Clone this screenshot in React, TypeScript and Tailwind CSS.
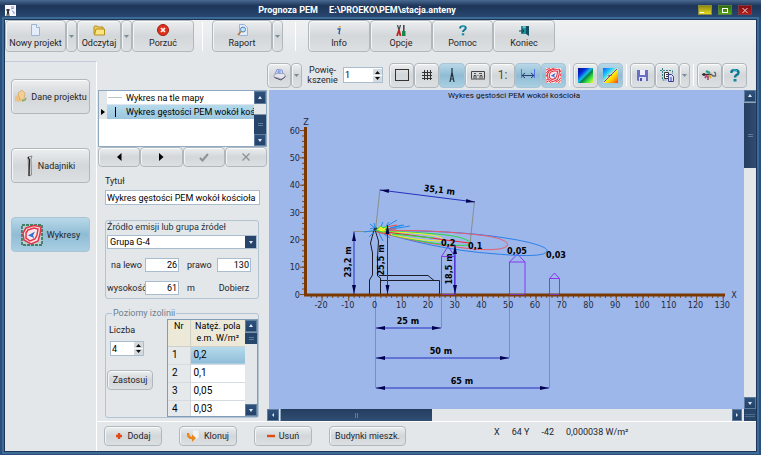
import React from "react";

type Kids = { children?: React.ReactNode; className?: string };

const face =
  "rounded-[4px] border border-[#b0b7bd] bg-linear-to-b from-[#eceeef] via-[#d3d7da] via-50% to-[#dde0e2] shadow-[inset_0_1px_0_#fafbfb,inset_1px_0_0_#f2f4f5]";
const active =
  "rounded-[4px] border border-[#a9c4d4] bg-linear-to-b from-[#b9d8e8] via-[#8fbcd5] via-50% to-[#a9cfe2]";
const field = "border border-[#a9bdcf] bg-white text-black outline-none";

function BigButton({ label, icon, className }: { label: string; icon: React.ReactNode; className: string }) {
  return (
    <button className={`${face} flex h-8 flex-col items-center justify-center whitespace-nowrap leading-[12px] ${className}`}>
      <span className="flex h-[14px] items-center">{icon}</span>
      <span>{label}</span>
    </button>
  );
}

function DropButton({ className, label }: { className: string; label: string }) {
  return (
    <button aria-label={label} className={`${face} flex w-[11px] items-center justify-center ${className}`}>
      <svg width="5" height="3" viewBox="0 0 5 3"><path d="M0 0h5L2.500 3z" fill="#7b8c99" /></svg>
    </button>
  );
}

function ToolButton({ children, label, on, className = "w-[25px]" }: Kids & { label: string; on?: boolean }) {
  return (
    <button aria-label={label} className={`${on ? active : face} flex h-[25px] shrink-0 items-center justify-center ${className}`}>
      {children}
    </button>
  );
}

function Divider({ className = "" }: { className?: string }) {
  return <div className={`w-px bg-white ${className}`} />;
}

function Arrow({ dir }: { dir: "up" | "down" | "left" | "right" }) {
  const d = { up: "M1 4L3 1L5 4z", down: "M1 2h4L3 5z", left: "M4 1v4L2 3z", right: "M2 1v4L4 3z" }[dir];
  return (
    <svg width="6" height="6" viewBox="0 0 6 6"><path d={d} fill="#dfe9f2" /></svg>
  );
}

function ScrollCap({ dir, className }: { dir: "up" | "down" | "left" | "right"; className: string }) {
  return (
    <button
      aria-label={`scroll ${dir}`}
      className={`flex shrink-0 items-center justify-center border border-[#5f7c9c] bg-linear-to-b from-[#2e517d] to-[#23426a] ${className}`}
    >
      <Arrow dir={dir} />
    </button>
  );
}

function Spinner({ id, value, className }: { id: string; value: string; className: string }) {
  return (
    <div className={`flex items-center border border-[#a9bdcf] bg-white ${className}`}>
      <input id={id} defaultValue={value} className="min-w-0 flex-1 bg-transparent px-px text-black outline-none" />
      <svg width="9" height="13" viewBox="0 0 9 13">
        <rect x="0" y="0" width="9" height="6" rx="1" fill="#d5dade" />
        <rect x="0" y="7" width="9" height="6" rx="1" fill="#d5dade" />
        <path d="M2 5h5L4.500 2zM2 8h5L4.500 11z" fill="#111" />
      </svg>
    </div>
  );
}

function Isolines({ size, framed }: { size: number; framed?: boolean }) {
  return (
    <svg width={size} height={size} viewBox="0 0 22 22" fill="none">
      {framed ? (
        <rect x="1" y="1" width="20" height="20" fill="#b7cfd6" stroke="#22663f" strokeWidth="1.400" strokeDasharray="3 1" />
      ) : (
        <g>
          <rect width="22" height="22" fill="#fbe9e9" />
          <path d="M0 3L6 0M0 8L3 4L12 0M0 13L2 9M0 18L3 16M0 21L4 19L8 22M14 21L19 18L22 14M18 22L22 18M19 1L22 6M21 8v4" stroke="#f0262c" strokeWidth="1.400" />
        </g>
      )}
      <path d="M5 4L13 1.500L20 3L19 10L17 17L10 20L3 16L2 9z" fill="#f8e6ea" stroke="#e23446" strokeWidth="1.500" />
      <path d="M7 6L13 4L17 5L16 11L14 15L9 17L5 14L5 9z" stroke="#e23446" strokeWidth="1.500" />
      <path d="M7 11.500L14 7.500L12 11.500L13.500 15L11 13z" fill="#2c6fd0" />
    </svg>
  );
}

function HelpMark({ className = "" }: { className?: string }) {
  return (
    <svg className={className} viewBox="0 0 10 13" fill="none">
      <path d="M1.500 4V2.500Q2 1 5 1Q8.500 1 8.500 3.500Q8.500 5 6.500 6Q5 7 5 8.500" stroke="#0a7792" strokeWidth="2.400" />
      <path d="M3 1.200Q5 .5 7 1.500" stroke="#35c7da" />
      <rect x="3.500" y="10" width="3" height="2.500" fill="#0b8ba3" />
    </svg>
  );
}

function Spectrum({ full }: { full?: boolean }) {
  const id = full ? "spectrum-full" : "spectrum-half";
  return (
    <svg width="15" height="15" viewBox="0 0 15 15">
      <defs>
        <linearGradient id={id} x1="0" y1="0" x2="1" y2="1">
          <stop offset="0" stopColor={full ? "#1b5cff" : "#03107c"} />
          <stop offset=".28" stopColor={full ? "#16c6ff" : "#0a2ce0"} />
          <stop offset=".48" stopColor={full ? "#a8f0c0" : "#10c5e0"} />
          <stop offset=".56" stopColor={full ? "#fff000" : "#087a50"} />
          <stop offset=".75" stopColor={full ? "#ffb000" : "#35e43a"} />
          <stop offset="1" stopColor={full ? "#ff3a10" : "#fff44a"} />
        </linearGradient>
      </defs>
      <rect width="15" height="15" fill={`url(#${id})`} />
      {full && <path d="M1 14L14 1M5 8l4-1" stroke="#a43c7c" fill="none" />}
    </svg>
  );
}

function TitleBar() {
  return (
    <header className="flex h-5 shrink-0 items-center bg-linear-to-b from-[#4a6a92] via-[#1d3557] via-30% to-[#2b4d78] px-[5px]">
      <svg width="11" height="11" viewBox="0 0 11 11">
        <rect width="11" height="11" fill="#f4f6fb" />
        <path d="M2 11L3 4L4 11M1 5h4" stroke="#222" fill="none" />
        <path d="M6 2h3M6 4l3-1M7 6l2 1M8 8h2" stroke="#8a8fe0" />
      </svg>
      <h1 className="flex-1 whitespace-pre text-center text-[9px] font-bold leading-3 text-white">
        {"Prognoza PEM     E:\\PROEKO\\PEM\\stacja.anteny"}
      </h1>
      <div className="flex gap-[6px] pr-1">
        <button aria-label="Minimalizuj" className="flex h-[10px] w-[14px] items-end border border-[#8d8a3a] bg-linear-to-b from-[#8f8a10] to-[#e6dc20] p-px">
          <span className="h-px w-1 bg-white" />
        </button>
        <button aria-label="Maksymalizuj" className="flex h-[10px] w-[14px] items-center justify-center border border-[#50803a] bg-linear-to-b from-[#2f6a10] to-[#57a818]">
          <span className="h-[5px] w-[6px] border border-white" />
        </button>
        <button aria-label="Zamknij" className="flex h-[10px] w-[14px] items-center justify-center border border-[#803a40] bg-linear-to-b from-[#7d1014] to-[#b81c1c]">
          <svg width="6" height="5" viewBox="0 0 6 5"><path d="M.5 0l5 5M5.500 0l-5 5" stroke="#e9d5d5" /></svg>
        </button>
      </div>
    </header>
  );
}

function MainToolbar() {
  return (
    <div className="flex h-[33px] shrink-0 items-stretch bg-linear-to-b from-[#f0f1f1] to-[#e3e7ea]">
      <BigButton className="w-[61px]" label="Nowy projekt" icon={
        <svg width="9" height="12" viewBox="0 0 9 12"><path d="M.5 .5h5l3 3v8h-8z" fill="#e4eefb" stroke="#9fb4d2" /><path d="M5.500 .5v3h3" fill="#fff" stroke="#9fb4d2" /></svg>
      } />
      <DropButton label="Nowy projekt: menu" className="h-8" />
      <BigButton className="w-[44px]" label="Odczytaj" icon={
        <svg width="12" height="11" viewBox="0 0 12 11"><path d="M1 9V2q0-1 1-1h2l1 1h5v2" fill="#f0cf5a" stroke="#b58d1c" /><path d="M1.500 10L3 4h8.500V10z" fill="#fbe582" stroke="#b58d1c" /></svg>
      } />
      <DropButton label="Odczytaj: menu" className="h-8" />
      <BigButton className="w-[62px]" label="Porzuć" icon={
        <svg width="12" height="12" viewBox="0 0 12 12"><circle cx="6" cy="6" r="5.500" fill="#e0311c" stroke="#a31d10" /><path d="M4 4l4 4M8 4l-4 4" stroke="#fff" strokeWidth="1.600" /></svg>
      } />
      <Divider className="my-[2px] ml-2 mr-[9px]" />
      <BigButton className="w-[60px]" label="Raport" icon={
        <svg width="11" height="12" viewBox="0 0 11 12"><path d="M2.500 .5h5l3 3v8h-8z" fill="#e4eefb" stroke="#9fb4d2" /><circle cx="6" cy="5.500" r="2.500" fill="#c5e2f8" stroke="#4f83bb" /><path d="M4 7.500L1 11" stroke="#b0793a" strokeWidth="1.600" /></svg>
      } />
      <DropButton label="Raport: menu" className="h-8" />
      <Divider className="my-[2px] ml-3 mr-3" />
      <BigButton className="w-[62px]" label="Info" icon={
        <svg width="6" height="10" viewBox="0 0 6 10"><path d="M3 1h2L4.500 2.500h-2z" fill="#e8a21a" /><path d="M1.500 4h2.500L3 8q0 1 1 .5" stroke="#2b59a8" strokeWidth="1.300" fill="none" /></svg>
      } />
      <BigButton className="w-[62px]" label="Opcje" icon={
        <svg width="10" height="11" viewBox="0 0 10 11"><path d="M1.500 0L3 5M4.500 0L3 5" stroke="#444" strokeWidth="1.200" fill="none" /><path d="M3 5L1 11M3 5l1.500 6" stroke="#c62222" strokeWidth="1.800" fill="none" /><path d="M6 6h3.500v5H6z" fill="#14884f" /><path d="M7.800 0v6" stroke="#333" strokeWidth="1.400" /></svg>
      } />
      <BigButton className="w-[61px]" label="Pomoc" icon={<HelpMark className="h-[11px] w-2" />} />
      <BigButton className="w-[62px]" label="Koniec" icon={
        <svg width="11" height="11" viewBox="0 0 11 11"><rect x="2" y="1" width="8" height="8" fill="#1a939c" /><path d="M5 1h5v10l-3-2V3z" fill="#174f62" /><path d="M0 6h5M3 4l2 2l-2 2" stroke="#143f4c" fill="none" /><path d="M4 2h3" stroke="#bfeef0" /></svg>
      } />
    </div>
  );
}

function SideButton({ label, icon, on }: { label: string; icon: React.ReactNode; on?: boolean }) {
  return (
    <button className={`${on ? active : face} flex h-[35px] w-full items-center justify-center gap-1 whitespace-nowrap`}>
      {icon}
      <span>{label}</span>
    </button>
  );
}

function Sidebar() {
  return (
    <nav className="flex w-[92px] shrink-0 flex-col gap-[34px] border-r border-t border-[#c3ccd8] border-r-white px-[6px] pt-[17px]">
      <SideButton label="Dane projektu" icon={
        <svg width="13" height="13" viewBox="0 0 13 13"><path d="M1 7L5 4L9 7L6 12L1 11z" fill="#edc184" /><path d="M4 3L8 0L11 3L10 9L6 10z" fill="#f3cf98" stroke="#d39a51" strokeWidth=".6" /><path d="M8 11l3-1l1-2" stroke="#7daf55" strokeWidth="1.500" fill="none" /></svg>
      } />
      <SideButton label="Nadajniki" icon={
        <svg width="8" height="22" viewBox="0 0 8 22"><path d="M2 2l4-1L5 4L5.500 20L3 21z" fill="#d8d8d8" stroke="#777" strokeWidth=".8" /><path d="M2 2l1.500 3L3 21" stroke="#222" strokeWidth="1.200" fill="none" /></svg>
      } />
      <SideButton on label="Wykresy" icon={<Isolines size={22} framed />} />
    </nav>
  );
}

function PlotList() {
  return (
    <div className="flex h-[57px] border border-[#8ea9c2] bg-white">
      <ul className="min-w-0 flex-1">
        <li className="flex h-[14px] items-center border-b border-[#dde6ee]">
          <span className="h-full w-2 shrink-0 bg-[#e3e7ea]" />
          <span className="mr-1 ml-px flex w-[14px] shrink-0"><i className="h-px w-full bg-[#b9c3cc]" /></span>
          <span className="truncate text-black">Wykres na tle mapy</span>
        </li>
        <li className="flex h-[14px] items-center">
          <span className="flex h-full w-2 shrink-0 items-center justify-center bg-[#e3e7ea]">
            <svg width="4" height="6" viewBox="0 0 4 6"><path d="M0 0v6l4-3z" /></svg>
          </span>
          <span className="flex h-full min-w-0 flex-1 items-center bg-linear-to-b from-[#b4d9eb] to-[#9ac6de]">
            <span className="mr-1 ml-px flex h-full w-[14px] shrink-0 items-center justify-center"><i className="h-[10px] w-px bg-black" /></span>
            <span className="overflow-hidden whitespace-nowrap text-black">Wykres gęstości PEM wokół kośc</span>
          </span>
        </li>
      </ul>
      <div className="flex w-3 shrink-0 flex-col bg-[#e3e7ea]">
        <ScrollCap dir="up" className="h-[13px]" />
        <div className="flex-1" />
        <div className="flex h-5 items-center justify-center border-t border-[#7d94ad] bg-[#27456b]"><i className="h-[3px] w-[5px] border-y border-[#5d7c9c]" /></div>
        <ScrollCap dir="down" className="h-3" />
      </div>
    </div>
  );
}

function Navigator() {
  const b = `${face} flex h-5 flex-1 items-center justify-center`;
  return (
    <div className="flex">
      <button aria-label="Poprzedni" className={b}><svg width="5" height="8" viewBox="0 0 5 8"><path d="M4.500 0v8L0 4z" /></svg></button>
      <button aria-label="Następny" className={b}><svg width="5" height="8" viewBox="0 0 5 8"><path d="M0 0v8l4.500-4z" /></svg></button>
      <button aria-label="Zatwierdź" className={b}><svg width="10" height="9" viewBox="0 0 10 9"><path d="M1 5l2.500 2.500L9 1" stroke="#8d9296" strokeWidth="2" fill="none" /></svg></button>
      <button aria-label="Anuluj" className={b}><svg width="8" height="8" viewBox="0 0 8 8"><path d="M.5 .5l7 7M7.500 .5l-7 7" stroke="#8d9296" strokeWidth="1.300" /></svg></button>
    </div>
  );
}

function SourceGroup() {
  const num = `${field} h-[14px] w-[34px] px-px text-right`;
  return (
    <fieldset className="mt-[15px] ml-[7px] mr-2 rounded-[3px] border border-[#b3c3d1] px-px pb-[3px]">
      <label htmlFor="source" className="block text-[#26333d]">Źródło emisji lub grupa źródeł</label>
      <div className="mt-[2px] flex border border-[#a9bdcf] bg-white">
        <select id="source" className="h-3 min-w-0 flex-1 appearance-none bg-white pl-[2px] leading-3 text-black outline-none">
          <option>Grupa G-4</option>
        </select>
        <span className="pointer-events-none flex w-[11px] items-center justify-center bg-[#27456b]"><Arrow dir="down" /></span>
      </div>
      <div className="mt-[9px] grid grid-cols-[38px_34px_38px_34px] items-center gap-y-[9px]">
        <label htmlFor="left" className="pr-[3px] text-right whitespace-nowrap">na lewo</label>
        <input id="left" defaultValue="26" className={num} />
        <label htmlFor="right" className="pl-2">prawo</label>
        <input id="right" defaultValue="130" className={num} />
        <label htmlFor="height" className="whitespace-nowrap">wysokość</label>
        <input id="height" defaultValue="61" className={num} />
        <span className="pl-2">m</span>
        <button className="text-center whitespace-nowrap">Dobierz</button>
      </div>
    </fieldset>
  );
}

const levels = ["0,2", "0,1", "0,05", "0,03"];

function LevelsGroup() {
  return (
    <fieldset className="mt-[8px] ml-[7px] mr-2 flex rounded-[3px] border border-[#b3c3d1]">
      <legend className="ml-[6px] h-3 px-px leading-3 text-[#6c8092]">Poziomy izolinii</legend>
      <div className="flex w-[61px] flex-col pt-[5px]">
        <label htmlFor="count" className="pl-[3px]">Liczba</label>
        <Spinner id="count" value="4" className="mt-[5px] ml-1 h-[15px] w-[34px]" />
        <button className={`${face} mt-[14px] ml-px h-5 w-[46px]`}>Zastosuj</button>
      </div>
      <div className="flex h-[98px] min-w-0 flex-1 overflow-hidden border border-[#7f9db9] bg-white">
        <table className="flex-1 table-fixed border-collapse self-start text-[10px] text-black">
          <thead>
            <tr className="h-[26px] bg-[#ece9d8] text-[9px]">
              <th className="w-[22px] border-r border-b border-[#cfd0c8] align-top font-normal">Nr</th>
              <th className="border-b border-[#cfd0c8] align-top font-normal whitespace-nowrap">Natęż. pola<br />e.m. W/m²</th>
            </tr>
          </thead>
          <tbody>
            {levels.map((v, i) => (
              <tr key={v} className="h-[18px] border-b border-[#d5dbe0]">
                <td className="border-r border-[#cfd6db] bg-[#e6e9eb] pl-1">{i + 1}</td>
                <td className={i === 0 ? "bg-linear-to-b from-[#b8dbed] to-[#8fbdd6] pl-[3px]" : "pl-[3px]"}>{v}</td>
              </tr>
            ))}
          </tbody>
        </table>
        <div className="flex w-3 shrink-0 flex-col bg-[#e3e7ea]">
          <ScrollCap dir="up" className="h-3" />
          <div className="flex h-3 items-center justify-center border-t border-[#7d94ad] bg-[#27456b]"><i className="h-[3px] w-[5px] border-y border-[#5d7c9c]" /></div>
          <div className="flex-1" />
          <ScrollCap dir="down" className="h-3" />
        </div>
      </div>
    </fieldset>
  );
}

function ParameterPanel() {
  return (
    <section className="flex w-[170px] shrink-0 flex-col pt-[29px] pl-px">
      <PlotList />
      <Navigator />
      <label htmlFor="title" className="mt-2 ml-[7px]">Tytuł</label>
      <input id="title" defaultValue="Wykres gęstości PEM wokół kościoła" className={`${field} mt-[3px] ml-[7px] mr-[7px] h-[15px] px-px`} />
      <SourceGroup />
      <LevelsGroup />
    </section>
  );
}

function ChartToolbar() {
  return (
    <div className="flex h-[29px] shrink-0 items-center pb-px">
      <ToolButton label="Drukuj" className="w-6">
        <svg width="13" height="12" viewBox="0 0 13 12"><path d="M2 5L4 .5l5 .5L10 5" fill="#d6dcff" stroke="#8790cf" /><circle cx="6" cy="3" r="1.800" fill="#7fa8e8" /><path d="M1 6L4 4.500h7l1.500 2.500L9 10L1 8z" fill="#e4e4ee" stroke="#9a9aae" strokeWidth=".8" /><path d="M1.500 8.500L8 11l4.500-3.500" stroke="#4d4d63" fill="none" /></svg>
      </ToolButton>
      <DropButton label="Drukuj: menu" className="h-[25px]" />
      <label htmlFor="zoom" className="mr-1 ml-1 w-[33px] text-center leading-[10px]">Powię-kszenie</label>
      <Spinner id="zoom" value="1" className="mr-[6px] h-4 w-10" />
      <ToolButton label="Ramka"><i className="h-3 w-[14px] border border-[#333]" /></ToolButton>
      <ToolButton label="Siatka"><svg width="12" height="12" viewBox="0 0 12 12"><path d="M3.500 1v10M6.500 1v10M9.500 1v10M1 3.500h10M1 6.500h10M1 9.500h10" stroke="#333" /></svg></ToolButton>
      <ToolButton label="Wieża" on className="w-[26px]"><svg width="8" height="15" viewBox="0 0 8 15"><path d="M4 0v5M4 4L2 14M4 4l2 10M3 8h2M2.500 11h3" stroke="#22313a" fill="none" strokeWidth="1.200" /></svg></ToolButton>
      <ToolButton label="Zabudowa"><svg width="14" height="9" viewBox="0 0 14 9"><path d="M.5 .5h13v7M.5 .5v7M0 8h14M3 7.500v-3h2v3M9 7.500v-3h2v3" stroke="#444" fill="none" /><path d="M3 2.500h2M8 2.500h3M6.500 4.500h1" stroke="#555" /></svg></ToolButton>
      <ToolButton label="Skala"><span className="text-[12px] leading-3 text-[#5b4a30]">1:</span></ToolButton>
      <ToolButton label="Wymiary" on className="w-[26px]"><svg width="14" height="12" viewBox="0 0 14 12"><path d="M.5 0v9M13.500 0v9" stroke="#5a74e8" /><path d="M1 6.500h12M4 4L1 6.500L4 9M10 4l3 2.500L10 9" stroke="#2a3f70" fill="none" /></svg></ToolButton>
      <ToolButton label="Izolinie" on><Isolines size={15} /></ToolButton>
      <Divider className="mx-[3px] h-[22px]" />
      <ToolButton label="Mapa barwna"><Spectrum /></ToolButton>
      <ToolButton label="Przekrój barwny" on><Spectrum full /></ToolButton>
      <Divider className="mx-[3px] h-[22px]" />
      <ToolButton label="Zapisz"><svg width="11" height="11" viewBox="0 0 11 11"><path d="M0 0h11v11H1L0 10z" fill="#6a6fc4" /><rect x="3" y="0" width="5" height="5" fill="#eef" /><rect x="2" y="7" width="7" height="4" fill="#dfe0f5" /><rect x="3" y="8" width="2" height="3" fill="#4a4fa8" /></svg></ToolButton>
      <ToolButton label="Kopiuj" className="w-6"><svg width="15" height="15" viewBox="0 0 15 15" fill="none"><path d="M2.500 0v12M0 2.500h12M2.500 12h4M12.500 2.500V6" stroke="#31808c" strokeDasharray="2 1" /><path d="M4.500 4.500h4v6h-4z" fill="#fff" stroke="#333" /><path d="M6 6.500h2M6 8.500h2" stroke="#333" /><path d="M8.500 6.500h3l2 2v5h-5z" fill="#dfe2ff" stroke="#3a3f9c" /><path d="M10 10h2M10 12h2" stroke="#3a3f9c" /></svg></ToolButton>
      <DropButton label="Kopiuj: menu" className="h-[25px]" />
      <Divider className="mx-[3px] h-[22px]" />
      <ToolButton label="Narzędzia"><svg width="15" height="12" viewBox="0 0 15 12"><path d="M0 5.500h9M2 4v3" stroke="#333" strokeWidth="1.500" /><path d="M4 2l4 2" stroke="#2aa08c" strokeWidth="2.400" /><path d="M3 9l2-3" stroke="#c83a78" strokeWidth="2" /><path d="M7 6l2 3" stroke="#d7b01e" strokeWidth="2" /><path d="M9 5l2 2h2.500V4L12 3" stroke="#666" strokeWidth="1.300" fill="none" /><path d="M6 7v4" stroke="#7d2c50" strokeWidth="1.300" /></svg></ToolButton>
      <ToolButton label="Pomoc do wykresu"><HelpMark className="h-[13px] w-[10px]" /></ToolButton>
    </div>
  );
}

const X0 = 375.5;
const Y0 = 294.5;
const sx = (m: number) => X0 + m * 2.675;
const sy = (m: number) => Y0 - m * 2.733;
const xTicks = [-20, -10, 0, 10, 20, 30, 40, 50, 60, 70, 80, 90, 100, 110, 120, 130];
const yTicks = [0, 10, 20, 30, 40, 50, 60];
const minorX = Array.from({ length: 78 }, (_, i) => -24 + i * 2);
const minorY = Array.from({ length: 31 }, (_, i) => i * 2);

function Dim({ x1, y1, x2, y2 }: { x1: number; y1: number; x2: number; y2: number }) {
  const a = (Math.atan2(y2 - y1, x2 - x1) * 180) / Math.PI;
  return (
    <g>
      <path d={`M${x1} ${y1}L${x2} ${y2}`} stroke="#2430c0" />
      <path d="M0 0l9-2v4z" fill="#00004c" transform={`translate(${x1} ${y1}) rotate(${a})`} />
      <path d="M0 0l-9-2v4z" fill="#00004c" transform={`translate(${x2} ${y2}) rotate(${a})`} />
    </g>
  );
}

function Chart() {
  return (
    <svg viewBox="269 90 475 319" className="block h-full w-full bg-[#9db7eb] font-['DejaVu_Sans_Condensed','DejaVu_Sans',sans-serif] text-[9px]" fill="none">
      <text x="514" y="98" textAnchor="middle" fill="#111" className="font-[Roboto,sans-serif] text-[8px]">Wykres gęstości PEM wokół kościoła</text>

      <g stroke="#7a4a2c">
        {minorX.map((m) => <path key={m} d={`M${sx(m)} 296v2`} />)}
        {minorY.map((m) => <path key={m} d={`M304 ${sy(m)}h-2`} />)}
        {xTicks.map((m) => <path key={m} d={`M${sx(m)} 296v5`} />)}
        {yTicks.map((m) => <path key={m} d={`M304 ${sy(m)}h-4`} />)}
      </g>

      <g stroke="#8a9085">
        <path d="M375.500 294v94M441.500 294v34M509.500 294v64M549.500 294v94" />
        <path d="M353 231.500h22M375.500 230L380 189M470 244L474.500 201" />
      </g>

      <g stroke="#1c1c2c">
        <path d="M369.500 294v-14l3-5v-22l-2-10l4-15l4 13l-1 17v18l3 2v16" />
        <path d="M380 280.500h59.500v14M379 275.500h49l6 5" />
      </g>

      <g stroke="#8838ee">
        <path d="M441.500 294v-37.500h13V294M441.500 256.500l6.500-10l7 10" />
        <path d="M509.500 294v-32h15.500v32M509.500 262l8-8l7.500 8" />
        <path d="M549.500 294v-15.500h10V294M549.500 278.500l5-5.500l5 5.500" />
      </g>

      <path d="M305.500 127v168H725" stroke="#7b3900" strokeWidth="3" />
      <path d="M441 294.500h14M509 294.500h16M549 294.500h10" stroke="#7838b0" />

      <g strokeWidth="1">
        <path d="M376 231C430 230 475 233 505 238C527 241 549 247 547 251C545 257 521 256 497 254C450 251 410 241 376 231z" stroke="#2a80e8" />
        <path d="M376 231C420 229 465 233 487 236C505 239 509 243 507 246C502 251 480 250 464 248C432 244 406 240 376 231z" stroke="#ec5968" />
        <path d="M376 231C405 232 440 233 458 237C469 240 473 243 468 245C450 247 414 241 376 231z" stroke="#27da3b" />
        <path d="M382 232C397 232 427 233 440 237Q446 240 438 241C420 240 402 238 382 232z" stroke="#f4f01d" />
        <path d="M376 231C414 235 442 240 470 243" stroke="#ef202b" />
        <path d="M378 230l-14 2M376 227l-6 2M380 229l3-7M382 229l15-9M384 230l20-5M386 230l24-4M384 229l5-7M378 231l5 10M381 232l9 6M376 229l-6-5M390 228l12-3M373 233l-4 4M375 227l-1-4" stroke="#238be9" />
        <path d="M381 228l16-3M379 229l17 0M377 232l14 3" stroke="#ed494b" />
        <path d="M376 230l5-4l2 2l5-2l-3 4l5 1l-8 1z" fill="#f2ef30" stroke="#31df35" />
        <path d="M392 234l42 4" stroke="#31df35" />
        <path d="M374 230l3-2" stroke="#273b58" strokeWidth="2" />
      </g>

      <Dim x1={354} y1={232} x2={354} y2={294} />
      <Dim x1={387.500} y1={225} x2={387.500} y2={294} />
      <Dim x1={455} y1={245} x2={455} y2={294} />
      <Dim x1={380} y1={190} x2={475} y2={202} />
      <Dim x1={376} y1={328} x2={441} y2={328} />
      <Dim x1={376} y1={358} x2={509} y2={358} />
      <Dim x1={376} y1={388} x2={549} y2={388} />

      <g fill="#1d2942">
        {xTicks.map((m) => <text key={m} x={sx(m) - 1} y="308" textAnchor="middle">{m}</text>)}
        {yTicks.map((m) => <text key={m} x="300" y={sy(m) + 3} textAnchor="end">{m}</text>)}
        <text x="306" y="125" textAnchor="middle">Z</text>
        <text x="734" y="298" textAnchor="middle">X</text>
      </g>
      <g fill="#000" className="font-bold">
        <text x="408" y="324" textAnchor="middle">25 m</text>
        <text x="441" y="354" textAnchor="middle">50 m</text>
        <text x="462" y="384" textAnchor="middle">65 m</text>
        <text textAnchor="middle" transform="translate(439 193) rotate(7)">35,1 m</text>
        <text textAnchor="middle" transform="translate(351 262) rotate(-90)">23,2 m</text>
        <text textAnchor="middle" transform="translate(384 260) rotate(-90)">25,5 m</text>
        <text textAnchor="middle" transform="translate(452 269) rotate(-90)">18,5 m</text>
        <text x="441" y="246">0,2</text>
        <text x="468" y="249">0,1</text>
        <text x="507" y="254">0,05</text>
        <text x="546" y="258">0,03</text>
      </g>
    </svg>
  );
}

function ChartArea() {
  return (
    <section className="flex min-w-0 flex-1 flex-col">
      <ChartToolbar />
      <div className="ml-[2px] flex min-h-0 flex-1">
        <div className="min-h-0 min-w-0 flex-1"><Chart /></div>
        <div className="flex w-3 shrink-0 flex-col">
          <ScrollCap dir="up" className="h-3" />
          <div className="flex h-[66px] items-center justify-center border-t border-[#8fa5bb] bg-linear-to-r from-[#243e60] to-[#304c72]"><i className="h-[3px] w-[5px] border-y border-[#5d7c9c]" /></div>
          <div className="flex-1" />
          <ScrollCap dir="down" className="h-3" />
        </div>
      </div>
      <div className="flex h-3 shrink-0">
        <ScrollCap dir="left" className="w-3" />
        <div className="ml-px flex w-[152px] items-center justify-center border-l border-[#8fa5bb] bg-linear-to-b from-[#223d60] to-[#314f74]"><i className="h-[5px] w-[3px] border-x border-[#5d7c9c]" /></div>
        <div className="flex-1" />
        <ScrollCap dir="right" className="mr-[2px] w-[10px]" />
        <div className="flex w-3 items-center justify-center bg-[#27456b]"><i className="h-[3px] w-[10px] border-y border-[#4d6c8c]" /></div>
      </div>
    </section>
  );
}

function Actions() {
  const b = `${face} flex h-5 items-center justify-center gap-1 whitespace-nowrap`;
  return (
    <footer className="flex h-[30px] shrink-0 items-start gap-[17px] border-t border-white pt-1 pl-[7px]">
      <button className={`${b} w-[58px]`}>
        <svg width="8" height="8" viewBox="0 0 8 8"><path d="M4 1v6M1 4h6" stroke="#e04a15" strokeWidth="2.400" /></svg>Dodaj
      </button>
      <button className={`${b} w-[58px]`}>
        <svg width="13" height="12" viewBox="0 0 13 12"><path d="M5 0h7v8l-5 2z" fill="#f2f3f5" stroke="#d2d6dc" strokeWidth=".6" /><path d="M1 3Q1 8 5 8" stroke="#e8881c" strokeWidth="2.500" fill="none" /><path d="M5 4.500L9 8L5 12z" fill="#e8881c" /></svg>Klonuj
      </button>
      <button className={`${b} w-[58px]`}>
        <svg width="8" height="8" viewBox="0 0 8 8"><path d="M0 4h8" stroke="#e04a15" strokeWidth="2.400" /></svg>Usuń
      </button>
      <button className={`${b} w-[77px]`}>Budynki mieszk.</button>
      <p className="ml-[71px] flex gap-3 whitespace-nowrap leading-3">
        <span>X</span><span>64 Y</span><span>-42</span><span>0,000038 W/m²</span>
      </p>
    </footer>
  );
}

export default function App() {
  return (
    <div className="flex h-screen min-h-[455px] w-full flex-col bg-[#2b4f7c] font-[Roboto,sans-serif] text-[9px] leading-3 text-[#1f2529]">
      <TitleBar />
      <div className="mr-[5px] mb-1 ml-[5px] flex min-h-0 flex-1 flex-col bg-[#e3e7ea] shadow-[0_0_0_1px_#1d3557,0_0_0_3px_#3d6b98]">
        <MainToolbar />
        <div className="mt-2 flex min-h-0 flex-1">
          <Sidebar />
          <main className="flex min-w-0 flex-1 flex-col">
            <div className="flex min-h-0 flex-1">
              <ParameterPanel />
              <ChartArea />
            </div>
            <Actions />
          </main>
        </div>
      </div>
    </div>
  );
}
